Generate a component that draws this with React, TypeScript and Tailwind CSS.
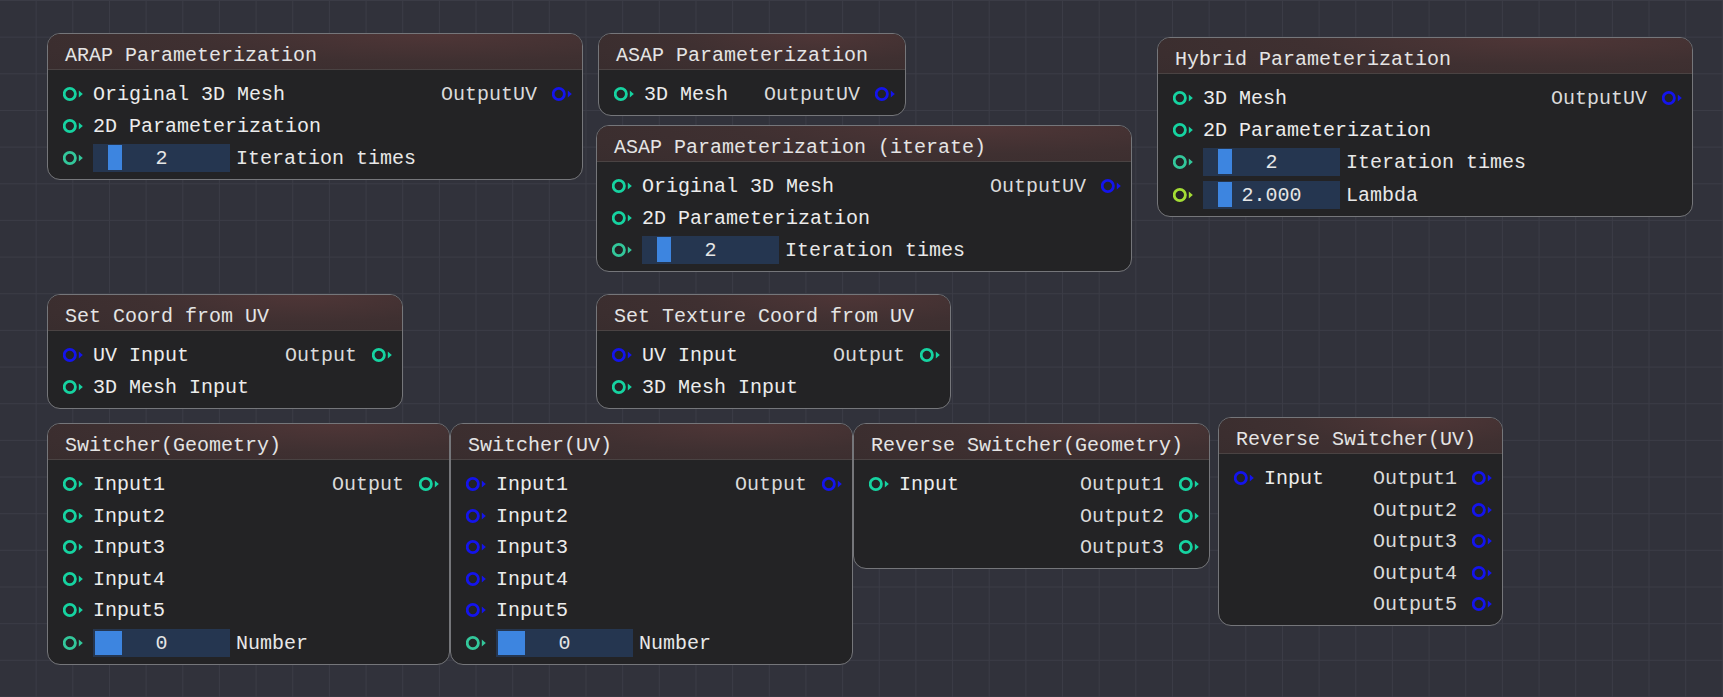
import type { ReactNode } from "react";

type PinKind = "geo" | "geoSoft" | "uv" | "float";

const pinColor: Record<PinKind, string> = {
  geo: "#16d3a1",
  geoSoft: "#33c79b",
  uv: "#1414ec",
  float: "#a4dd35",
};

type Port = { label: string; pin: PinKind };

type Row =
  | { kind: "ports"; input?: Port; output?: Port }
  | { kind: "slider"; pin: PinKind; value: string; label: string; wide?: boolean };

type NodeSpec = {
  title: string;
  place: string;
  rows: Row[];
};

function Pin({ kind }: { kind: PinKind }) {
  const c = pinColor[kind];
  return (
    <svg width="20" height="16" viewBox="0 0 20 16" className="shrink-0">
      <circle cx="6.8" cy="8" r="5.6" fill="none" stroke={c} strokeWidth="2.8" />
      <path d="M15.8 4.5L19.8 8L15.8 11.5Z" fill={c} />
    </svg>
  );
}

function Slider({ value, wide }: { value: string; wide?: boolean }) {
  return (
    <div className="relative flex h-[28px] w-[137px] shrink-0 items-center justify-center bg-[#253650]">
      {/* grab handle: small range gets a fat one */}
      <div
        className={
          wide
            ? "absolute bottom-[2px] left-[2px] top-[2px] w-[27px] bg-[#3d85e0]"
            : "absolute bottom-[2px] left-[15px] top-[1px] w-[14px] bg-[#3d85e0]"
        }
      />
      <span className="relative pt-[2px] text-[#e6e6e6]">{value}</span>
    </div>
  );
}

function NodeRow({ row }: { row: Row }) {
  if (row.kind === "slider") {
    return (
      <div className="mt-px flex h-[28px] items-center pl-[15px]">
        <Pin kind={row.pin} />
        <div className="ml-[10px] flex items-center gap-[6px]">
          <Slider value={row.value} wide={row.wide} />
          <span className="pt-[2px] text-[#e8e8e8]">{row.label}</span>
        </div>
      </div>
    );
  }
  return (
    <div className="flex h-[28px] items-center justify-between">
      <div className="flex items-center pl-[15px]">
        {row.input && (
          <>
            <Pin kind={row.input.pin} />
            <span className="ml-[10px] pt-[2px] text-[#ececec]">{row.input.label}</span>
          </>
        )}
      </div>
      {row.output && (
        <div className="flex items-center gap-[15px] pr-[10px]">
          <span className="pt-[2px] text-[#dadada]">{row.output.label}</span>
          <Pin kind={row.output.pin} />
        </div>
      )}
    </div>
  );
}

function GraphNode({ spec }: { spec: NodeSpec }): ReactNode {
  return (
    <div
      className={`absolute overflow-hidden rounded-[13px] border-[1.5px] border-[#75767a] bg-[#232325] ${spec.place}`}
    >
      <div className="flex h-[36px] items-center border-b border-[#4a4343] bg-[radial-gradient(90%_160%_at_72%_0%,#4f3637_0%,#3f3031_50%,#392d2e_100%)] pl-[17px] pt-[8px] text-[#e4e4e4]">
        {spec.title}
      </div>
      <div className="flex flex-col gap-[3.5px] pb-[7px] pt-[10px]">
        {spec.rows.map((row, i) => (
          <NodeRow key={i} row={row} />
        ))}
      </div>
    </div>
  );
}

const geo = (label: string, pin: PinKind = "geo"): Port => ({ label, pin });
const uv = (label: string): Port => ({ label, pin: "uv" });

const nodes: NodeSpec[] = [
  {
    title: "ARAP Parameterization",
    place: "left-[47px] top-[33px] w-[536px]",
    rows: [
      { kind: "ports", input: geo("Original 3D Mesh"), output: uv("OutputUV") },
      { kind: "ports", input: geo("2D Parameterization") },
      { kind: "slider", pin: "geoSoft", value: "2", label: "Iteration times" },
    ],
  },
  {
    title: "ASAP Parameterization",
    place: "left-[598px] top-[33px] w-[308px]",
    rows: [{ kind: "ports", input: geo("3D Mesh"), output: uv("OutputUV") }],
  },
  {
    title: "ASAP Parameterization (iterate)",
    place: "left-[596px] top-[125px] w-[536px]",
    rows: [
      { kind: "ports", input: geo("Original 3D Mesh"), output: uv("OutputUV") },
      { kind: "ports", input: geo("2D Parameterization") },
      { kind: "slider", pin: "geoSoft", value: "2", label: "Iteration times" },
    ],
  },
  {
    title: "Hybrid Parameterization",
    place: "left-[1157px] top-[37px] w-[536px]",
    rows: [
      { kind: "ports", input: geo("3D Mesh"), output: uv("OutputUV") },
      { kind: "ports", input: geo("2D Parameterization") },
      { kind: "slider", pin: "geoSoft", value: "2", label: "Iteration times" },
      { kind: "slider", pin: "float", value: "2.000", label: "Lambda" },
    ],
  },
  {
    title: "Set Coord from UV",
    place: "left-[47px] top-[294px] w-[356px]",
    rows: [
      { kind: "ports", input: uv("UV Input"), output: geo("Output") },
      { kind: "ports", input: geo("3D Mesh Input") },
    ],
  },
  {
    title: "Set Texture Coord from UV",
    place: "left-[596px] top-[294px] w-[355px]",
    rows: [
      { kind: "ports", input: uv("UV Input"), output: geo("Output") },
      { kind: "ports", input: geo("3D Mesh Input") },
    ],
  },
  {
    title: "Switcher(Geometry)",
    place: "left-[47px] top-[423px] w-[403px]",
    rows: [
      { kind: "ports", input: geo("Input1"), output: geo("Output") },
      { kind: "ports", input: geo("Input2") },
      { kind: "ports", input: geo("Input3") },
      { kind: "ports", input: geo("Input4") },
      { kind: "ports", input: geo("Input5") },
      { kind: "slider", pin: "geoSoft", value: "0", label: "Number", wide: true },
    ],
  },
  {
    title: "Switcher(UV)",
    place: "left-[450px] top-[423px] w-[403px]",
    rows: [
      { kind: "ports", input: uv("Input1"), output: uv("Output") },
      { kind: "ports", input: uv("Input2") },
      { kind: "ports", input: uv("Input3") },
      { kind: "ports", input: uv("Input4") },
      { kind: "ports", input: uv("Input5") },
      { kind: "slider", pin: "geoSoft", value: "0", label: "Number", wide: true },
    ],
  },
  {
    title: "Reverse Switcher(Geometry)",
    place: "left-[853px] top-[423px] w-[357px]",
    rows: [
      { kind: "ports", input: geo("Input"), output: geo("Output1") },
      { kind: "ports", output: geo("Output2") },
      { kind: "ports", output: geo("Output3") },
    ],
  },
  {
    title: "Reverse Switcher(UV)",
    place: "left-[1218px] top-[417px] w-[285px]",
    rows: [
      { kind: "ports", input: uv("Input"), output: uv("Output1") },
      { kind: "ports", output: uv("Output2") },
      { kind: "ports", output: uv("Output3") },
      { kind: "ports", output: uv("Output4") },
      { kind: "ports", output: uv("Output5") },
    ],
  },
];

export default function App() {
  return (
    <div className="relative h-[697px] w-[1723px] overflow-hidden bg-[#31323b] bg-[linear-gradient(to_right,#3b3c46_1px,transparent_1px),linear-gradient(to_bottom,#3b3c46_1px,transparent_1px)] bg-[size:36.67px_36.67px] bg-[position:-1px_0px] font-['Liberation_Mono','DejaVu_Sans_Mono',monospace] text-[20px] leading-none">
      {nodes.map((n) => (
        <GraphNode key={n.title} spec={n} />
      ))}
    </div>
  );
}
